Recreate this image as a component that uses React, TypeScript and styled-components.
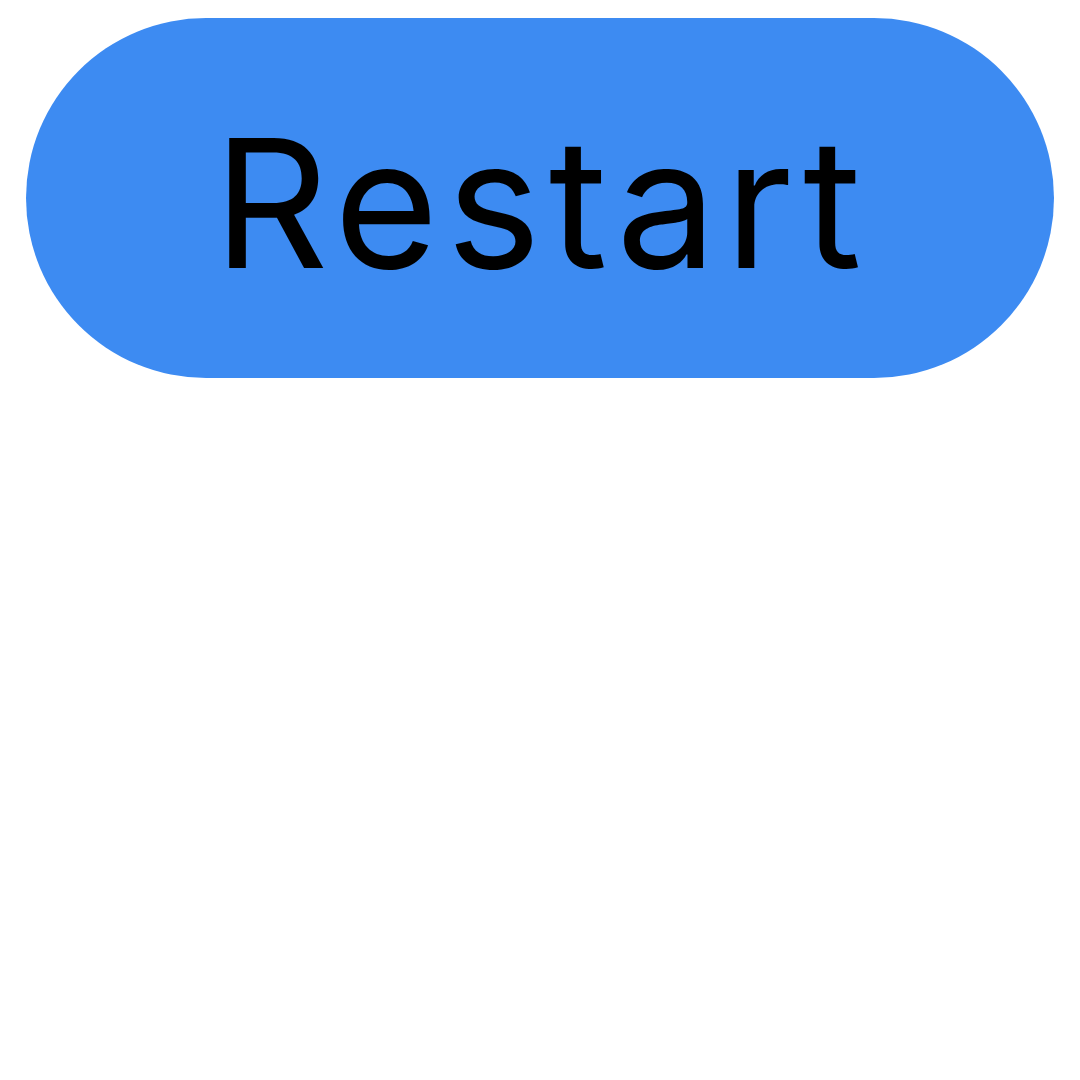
import React from "react";
import styled, { createGlobalStyle } from "styled-components";

const Global = createGlobalStyle`
  html, body { margin: 0; padding: 0; background: #ffffff; }
`;

const Page = styled.div`
  width: 1080px;
  height: 1080px;
  box-sizing: border-box;
  padding: 18px 26px;
  display: flex;
  flex-direction: column;
  align-items: stretch;
`;

const PillButton = styled.button`
  height: 360px;
  width: 1028px;
  border: none;
  border-radius: 180px;
  background: #3d8bf2;
  color: #000000;
  font-family: Inter, "Open Sans", sans-serif;
  font-weight: 400;
  font-size: 179px;
  letter-spacing: 8px;
  line-height: 1;
  display: flex;
  align-items: center;
  justify-content: center;
  padding: 10px 0 0 3px;
  cursor: pointer;
`;

export default function App() {
  return (
    <>
      <Global />
      <Page>
        <PillButton>Restart</PillButton>
      </Page>
    </>
  );
}
